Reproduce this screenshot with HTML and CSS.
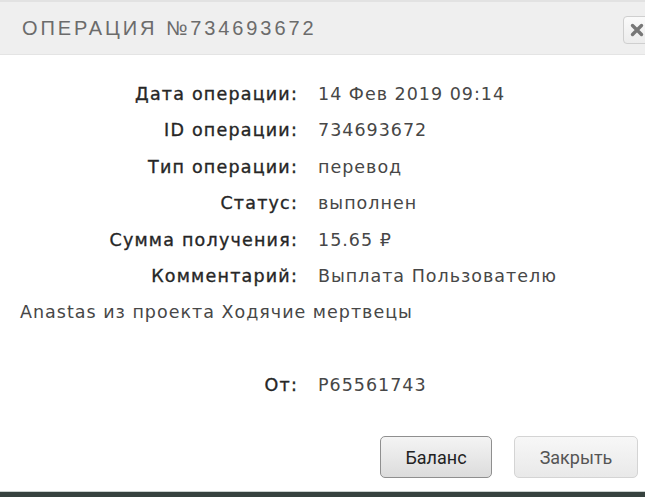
FILE: index.html
```html
<!DOCTYPE html>
<html lang="ru">
<head>
<meta charset="utf-8">
<link rel="stylesheet" href="styles.css">
</head>
<body>
<div class="modal">
  <div class="modal-header">
    <h1 class="title">ОПЕРАЦИЯ №734693672</h1>
    <button class="close-x" aria-label="close">
      <svg width="14" height="14" viewBox="0 0 14 14"><path d="M2.5 2.5 L11.5 11.5 M11.5 2.5 L2.5 11.5" stroke="#777" stroke-width="3.4" stroke-linecap="round"/></svg>
    </button>
  </div>
  <div class="modal-body">
    <div class="row"><span class="label">Дата операции:</span><span class="value">14 Фев 2019 09:14</span></div>
    <div class="row"><span class="label">ID операции:</span><span class="value">734693672</span></div>
    <div class="row"><span class="label">Тип операции:</span><span class="value">перевод</span></div>
    <div class="row"><span class="label">Статус:</span><span class="value">выполнен</span></div>
    <div class="row"><span class="label">Сумма получения:</span><span class="value">15.65 ₽</span></div>
    <div class="row"><span class="label">Комментарий:</span><span class="value">Выплата Пользователю<br>Anastas из проекта Ходячие мертвецы</span></div>
    <div class="row empty">&nbsp;</div>
    <div class="row"><span class="label">От:</span><span class="value">P65561743</span></div>
  </div>
  <div class="modal-footer">
    <button class="btn btn-primary">Баланс</button>
    <button class="btn btn-light">Закрыть</button>
  </div>
</div>
<div class="bottom-bar"></div>
</body>
</html>
```

FILE: styles.css
```css
html, body {
  margin: 0;
  padding: 0;
  background: #fff;
  width: 645px;
  height: 497px;
  overflow: hidden;
}
.modal {
  height: 491px;
  display: flex;
  flex-direction: column;
  font-family: "DejaVu Sans", "Noto Sans", sans-serif;
}
.modal-header {
  background: #efefef;
  border-top: 2px solid #e2e2e2;
  border-bottom: 1px solid #e4e4e4;
  display: flex;
  align-items: center;
  justify-content: space-between;
  padding-left: 22px;
  box-sizing: border-box;
  height: 55px;
}
.title {
  margin: 0;
  font-family: "Liberation Sans", sans-serif;
  font-weight: normal;
  font-size: 20px;
  letter-spacing: 2.9px;
  color: #6b6b6b;
}
.close-x {
  width: 28px;
  height: 28px;
  margin-right: -6px;
  margin-top: 4px;
  border: 1px solid #cfcfcf;
  border-radius: 4px;
  background: linear-gradient(#fafafa, #ececec);
  padding: 0;
  display: flex;
  align-items: center;
  justify-content: center;
}
.modal-body {
  padding: 21px 20px 0 20px;
  font-size: 17.5px;
  color: #3a3a3a;
  line-height: 36.4px;
}
.row {
  display: block;
}
.label {
  display: inline-block;
  width: 278px;
  text-align: right;
  color: #262626;
  letter-spacing: 1.2px;
  -webkit-text-stroke: 0.35px #262626;
  margin-right: 20px;
}
.value {
  color: #474747;
  letter-spacing: 1px;
}
.modal-footer {
  margin-top: auto;
  display: flex;
  justify-content: flex-end;
  gap: 22px;
  padding: 0 7px 13px 0;
}
.btn {
  font-family: "Roboto", sans-serif;
  font-size: 18px;
  height: 42px;
  border-radius: 5px;
  padding: 0;
}
.btn-primary {
  width: 112px;
  color: #222;
  border: 1px solid #8f8f8f;
  background: linear-gradient(#f4f4f4, #dcdcdc);
}
.btn-light {
  width: 124px;
  color: #555;
  border: 1px solid #d4d4d4;
  background: linear-gradient(#f7f7f7, #e9e9e9);
}
.bottom-bar {
  height: 6px;
  border-top: 1px solid #c9d0ce;
  background: #37423f;
  box-sizing: border-box;
}
```
